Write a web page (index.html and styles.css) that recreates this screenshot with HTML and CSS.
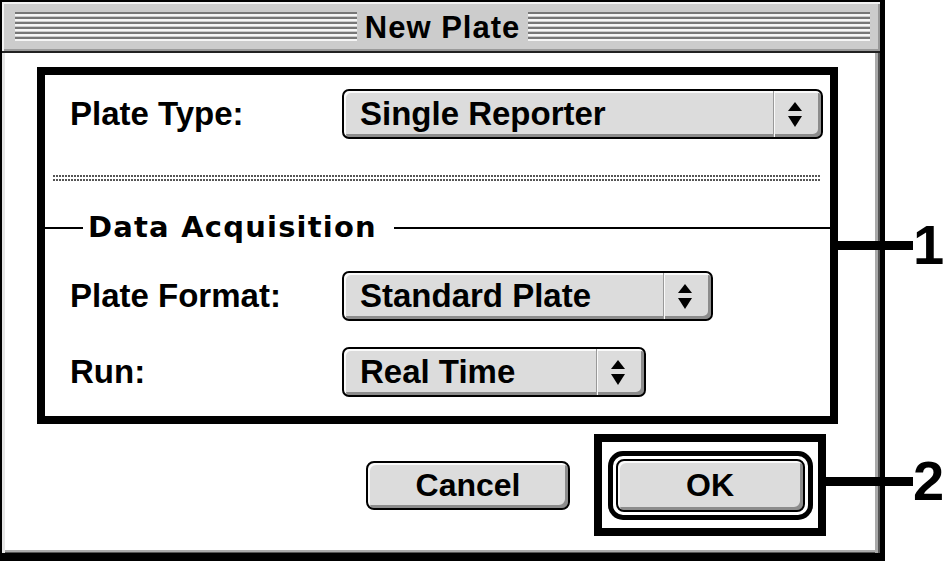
FILE: index.html
```html
<!DOCTYPE HTML>
<html>
	<head>
		<title>New Plate</title>
		<meta charset="utf-8">
		<link rel="stylesheet" href="styles.css">
	</head>
	<body>
	<div class="window">
		<div class="titlebar">
			<span class="stripes"></span>
			<span class="title">New Plate</span>
			<span class="stripes"></span>
		</div>
		<div class="content">
			<div class="settings">
				<div class="row">
					<label>Plate Type:</label>
					<div class="popup type-popup">
						<span class="value">Single Reporter</span>
						<span class="arrows"><svg width="14" height="25" viewBox="0 0 14 25"><polygon points="7,0 14,9 0,9"/><polygon points="0,14 14,14 7,25"/></svg></span>
					</div>
				</div>
				<div class="dotted"></div>
				<div class="group-title"><span>Data Acquisition</span></div>
				<div class="row format-row">
					<label>Plate Format:</label>
					<div class="popup format-popup">
						<span class="value">Standard Plate</span>
						<span class="arrows"><svg width="14" height="25" viewBox="0 0 14 25"><polygon points="7,0 14,9 0,9"/><polygon points="0,14 14,14 7,25"/></svg></span>
					</div>
				</div>
				<div class="row run-row">
					<label>Run:</label>
					<div class="popup run-popup">
						<span class="value">Real Time</span>
						<span class="arrows"><svg width="14" height="25" viewBox="0 0 14 25"><polygon points="7,0 14,9 0,9"/><polygon points="0,14 14,14 7,25"/></svg></span>
					</div>
				</div>
			</div>
			<div class="buttons">
				<button class="btn cancel">Cancel</button>
				<div class="ok-box">
					<div class="default-ring">
						<button class="btn ok">OK</button>
					</div>
				</div>
			</div>
		</div>
	</div>
	<!-- callouts drawn over the dialog -->
	<div class="callout callout-one"><span class="leader"></span><span class="num">1</span></div>
	<div class="callout callout-two"><span class="leader"></span><span class="num">2</span></div>
	</body>
</html>
```

FILE: styles.css
```css
html, body{
	margin: 0;
	padding: 0;
}

body{
	width: 945px;
	height: 561px;
	position: relative;
	overflow: hidden;
	background: #fff;
	font-family: "Liberation Sans", Arial, sans-serif;
	font-weight: bold;
	color: #000;
}

.window{
	width: 885px;
	height: 561px;
	box-sizing: border-box;
	border-style: solid;
	border-color: #000;
	border-width: 2px 5px 8px 2px;
	display: flex;
	flex-direction: column;
}

.titlebar{
	height: 51px;
	box-sizing: border-box;
	display: flex;
	align-items: center;
	padding: 0 10px 0 13px;
	background: #cccccc;
	border-bottom: 2px solid #222;
	box-shadow: inset 2px 2px 0 #f2f2f2, inset -2px -2px 0 #9a9a9a;
}

.stripes{
	flex: 1;
	height: 30px;
	background: repeating-linear-gradient(to bottom, #777 0 2px, #f6f6f6 2px 4px, #cccccc 4px 5px);
}

.title{
	padding: 0 8px;
	font-size: 31px;
	letter-spacing: 1px;
	line-height: 34px;
	margin-top: 2px;
}

.content{
	flex: 1;
	background: #fff;
	box-shadow: inset 3px 0 0 #e6e6e6, inset -2px 0 0 #555, inset -5px 0 0 #aaa, inset 0 -1px 0 #555, inset 0 -3px 0 #aaa;
}

.settings{
	width: 801px;
	height: 357px;
	box-sizing: border-box;
	margin: 14px 0 0 35px;
	border: 8px solid #000;
	padding-top: 14px;
	display: flex;
	flex-direction: column;
}

.row{
	display: flex;
	align-items: center;
	height: 50px;
	padding-left: 25px;
}

.row label{
	width: 272px;
	font-size: 33px;
	line-height: 50px;
}

.format-row{
	margin-top: 27px;
}

.run-row{
	margin-top: 26px;
}

.popup{
	height: 50px;
	box-sizing: border-box;
	display: flex;
	border: 2px solid #000;
	border-radius: 7px;
	background: #dcdcdc;
	box-shadow: inset 2px 2px 0 #fafafa, inset -3px -3px 0 #8c8c8c;
}

.type-popup{
	width: 481px;
}

.format-popup{
	width: 371px;
}

.run-popup{
	width: 304px;
}

.popup .value{
	flex: 1;
	padding-left: 16px;
	font-size: 33px;
	line-height: 46px;
	white-space: nowrap;
}

.popup .arrows{
	width: 48px;
	display: flex;
	align-items: center;
	justify-content: center;
	padding-right: 6px;
	box-sizing: border-box;
	border-left: 1px solid #999;
	box-shadow: inset 1px 0 0 #fafafa;
}

.arrows svg{
	fill: #000;
}

.dotted{
	height: 6px;
	margin: 36px 10px 0 8px;
	background:
		repeating-linear-gradient(to bottom, transparent 0 2px, #fff 2px 4px),
		repeating-linear-gradient(to right, #555 0 2px, #fff 2px 3px);
}

.group-title{
	display: flex;
	align-items: center;
	height: 34px;
	margin-top: 29px;
}

.group-title::before,
.group-title::after{
	content: "";
	height: 2px;
	background: #000;
	margin-top: 2px;
}

.group-title::before{
	width: 38px;
	margin-right: 5px;
}

.group-title::after{
	flex: 1;
	margin-left: 17px;
}

.group-title span{
	font-family: "DejaVu Sans", Verdana, sans-serif;
	font-size: 29px;
	letter-spacing: 1.2px;
	line-height: 34px;
}

.buttons{
	display: flex;
	justify-content: flex-end;
	align-items: center;
	gap: 24px;
	margin-top: 10px;
	padding-right: 54px;
}

.btn{
	font-family: "Liberation Sans", Arial, sans-serif;
	font-weight: bold;
	font-size: 32px;
	color: #000;
	padding: 0;
	border: 2px solid #000;
	border-radius: 8px;
	background: #dcdcdc;
	box-shadow: inset 2px 2px 0 #fafafa, inset -3px -3px 0 #8c8c8c;
}

.cancel{
	width: 204px;
	height: 49px;
}

.ok-box{
	width: 232px;
	height: 102px;
	box-sizing: border-box;
	border: 8px solid #000;
	display: flex;
	align-items: center;
	justify-content: center;
}

.default-ring{
	border: 5px solid #000;
	border-radius: 15px;
	padding: 3px;
	background: #fff;
}

.ok{
	display: block;
	width: 189px;
	height: 53px;
}

.callout{
	position: absolute;
	display: flex;
	align-items: center;
	height: 56px;
}

.callout-one{
	left: 838px;
	top: 217px;
}

.callout-two{
	left: 826px;
	top: 453px;
}

.leader{
	height: 9px;
	background: #000;
}

.callout-one .leader{
	width: 75px;
}

.callout-two .leader{
	width: 87px;
}

.num{
	font-size: 56px;
	line-height: 56px;
}
```
